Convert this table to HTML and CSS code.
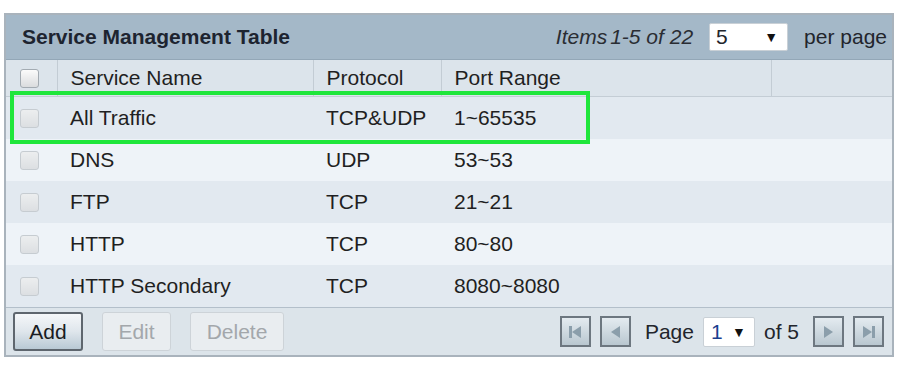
FILE: index.html
```html
<!DOCTYPE html>
<html lang="en">
<head>
    <meta charset="UTF-8">
    <meta name="viewport" content="width=device-width, initial-scale=1.0">
    <title>Service Management Table</title>
    <link rel="stylesheet" href="styles.css">
</head>
<body>
    <div class="panel">
        <div class="panel-head">
            <span class="panel-title">Service Management Table</span>
            <div class="pager-top">
                <span class="items">Items<span class="range">1-5 of 22</span></span>
                <span class="dropdown per-page"><span>5</span><span class="arrow">▼</span></span>
                <span>per page</span>
            </div>
        </div>

        <table class="grid">
            <colgroup>
                <col class="col-check">
                <col class="col-name">
                <col class="col-proto">
                <col class="col-port">
                <col>
            </colgroup>
            <thead>
                <tr>
                    <th><span class="check"></span></th>
                    <th>Service Name</th>
                    <th>Protocol</th>
                    <th>Port Range</th>
                    <th></th>
                </tr>
            </thead>
            <tbody>
                <tr>
                    <td><span class="check"></span></td>
                    <td>All Traffic</td>
                    <td>TCP&amp;UDP</td>
                    <td>1~65535</td>
                    <td></td>
                </tr>
                <tr>
                    <td><span class="check"></span></td>
                    <td>DNS</td>
                    <td>UDP</td>
                    <td>53~53</td>
                    <td></td>
                </tr>
                <tr>
                    <td><span class="check"></span></td>
                    <td>FTP</td>
                    <td>TCP</td>
                    <td>21~21</td>
                    <td></td>
                </tr>
                <tr>
                    <td><span class="check"></span></td>
                    <td>HTTP</td>
                    <td>TCP</td>
                    <td>80~80</td>
                    <td></td>
                </tr>
                <tr>
                    <td><span class="check"></span></td>
                    <td>HTTP Secondary</td>
                    <td>TCP</td>
                    <td>8080~8080</td>
                    <td></td>
                </tr>
            </tbody>
        </table>

        <div class="panel-foot">
            <div class="actions">
                <button class="btn btn-add">Add</button>
                <button class="btn btn-off">Edit</button>
                <button class="btn btn-off btn-wide">Delete</button>
            </div>
            <div class="pager-bottom">
                <span class="nav">
                    <svg width="16" height="16" viewBox="0 0 16 16"><rect x="2" y="2" width="3" height="12"/><polygon points="14,2 5,8 14,14"/></svg>
                </span>
                <span class="nav gap-wide">
                    <svg width="16" height="16" viewBox="0 0 16 16"><polygon points="13,2 4,8 13,14"/></svg>
                </span>
                <span>Page</span>
                <span class="dropdown page-no"><span class="cur">1</span><span class="arrow">▼</span></span>
                <span class="gap-wide">of 5</span>
                <span class="nav">
                    <svg width="16" height="16" viewBox="0 0 16 16"><polygon points="3,2 12,8 3,14"/></svg>
                </span>
                <span class="nav">
                    <svg width="16" height="16" viewBox="0 0 16 16"><polygon points="2,2 11,8 2,14"/><rect x="11" y="2" width="3" height="12"/></svg>
                </span>
            </div>
        </div>

        <!-- highlight around the first entry -->
        <div class="callout"></div>
    </div>
</body>
</html>
```

FILE: styles.css
```css
body {
    margin: 0;
    padding: 13px 0 0 4px;
    background-color: #ffffff;
    font-family: "Liberation Sans", Arial, sans-serif;
    font-size: 21px;
    color: #1f1f22;
}
.panel {
    position: relative;
    width: 890px;
    box-sizing: border-box;
    border: 2px solid #a9b3bc;
}
.panel-head {
    display: flex;
    align-items: center;
    justify-content: space-between;
    height: 44px;
    padding: 0 5px 0 16px;
    background-color: #a4b8c8;
    border-bottom: 1px solid #93a7b7;
}
.panel-title {
    font-weight: bold;
    color: #1d2430;
}
.pager-top {
    display: flex;
    align-items: center;
    gap: 16px;
    color: #22252c;
}
.items {
    font-style: italic;
    color: #2a2d33;
}
.range {
    margin-left: 3px;
}
.dropdown {
    display: flex;
    align-items: center;
    justify-content: space-between;
    box-sizing: border-box;
    background-color: #ffffff;
    border: 1px solid #c9d0d6;
    border-radius: 2px;
}
.dropdown .arrow {
    font-size: 14px;
    color: #111;
}
.per-page {
    width: 79px;
    height: 28px;
    padding: 0 9px 0 6px;
}
.page-no {
    width: 52px;
    height: 30px;
    padding: 0 8px 0 7px;
}
.page-no .cur {
    color: #1b3f8f;
}

.grid {
    width: 100%;
    border-collapse: collapse;
    table-layout: fixed;
}
.col-check {
    width: 51px;
}
.col-name {
    width: 256px;
}
.col-proto {
    width: 128px;
}
.col-port {
    width: 330px;
}
.grid th {
    height: 36px;
    padding: 0 13px;
    text-align: left;
    font-weight: normal;
    background-color: #dce4eb;
    border-bottom: 1px solid #c4cdd5;
    border-right: 1px solid #c3ccd4;
    border-left: 1px solid #f4f7f9;
}
.grid th:first-child {
    border-left: none;
}
.grid th:last-child {
    border-right: none;
}
.grid td {
    height: 42px;
    padding: 0 13px;
    white-space: nowrap;
}
.grid th:first-child,
.grid td:first-child {
    padding: 0 0 0 14px;
}
.grid tbody tr:nth-child(odd) {
    background-color: #e2e9f0;
}
.grid tbody tr:nth-child(even) {
    background-color: #eef3f8;
}
.check {
    display: block;
    width: 19px;
    height: 19px;
    box-sizing: border-box;
    border: 1px solid #c6ccd1;
    border-radius: 3px;
    background: linear-gradient(#eceeef, #dcdfe2);
}
thead .check {
    border-color: #a3abb2;
    background: linear-gradient(#fbfbfb, #dadcde);
}

.panel-foot {
    display: flex;
    align-items: center;
    justify-content: space-between;
    height: 47px;
    padding: 0 8px 0 7px;
    background-color: #dce4ea;
    border-top: 1px solid #b3bfca;
}
.actions {
    display: flex;
    gap: 19px;
}
.btn {
    height: 39px;
    width: 69px;
    box-sizing: border-box;
    font-family: inherit;
    font-size: 21px;
    border-radius: 3px;
    padding: 0;
}
.btn-add {
    width: 70px;
    color: #1a1c22;
    border: 2px solid #5e666e;
    background: linear-gradient(#f5f7f9, #dfe6ec 50%, #b9c9d4);
}
.btn-off {
    color: #a3a7ab;
    border: 1px solid #cdd3d8;
    background-color: #e9edf0;
}
.btn-wide {
    width: 94px;
}
.pager-bottom {
    display: flex;
    align-items: center;
    gap: 9px;
    color: #22252c;
}
.pager-bottom .gap-wide {
    margin-right: 5px;
}
.nav {
    display: flex;
    align-items: center;
    justify-content: center;
    width: 31px;
    height: 31px;
    box-sizing: border-box;
    border: 2px solid #6d7780;
    background: linear-gradient(#e4ebf0, #b9c7d0);
}
.nav svg {
    fill: #8b9eab;
}

.callout {
    position: absolute;
    left: 4px;
    top: 76px;
    width: 580px;
    height: 53px;
    box-sizing: border-box;
    border: 4px solid #1fe63b;
}
```
